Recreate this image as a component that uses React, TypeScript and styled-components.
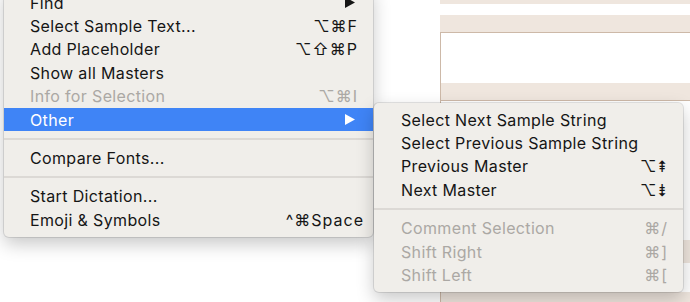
import styled, {createGlobalStyle} from 'styled-components';

const GlobalStyle = createGlobalStyle`
  html, body {
    margin: 0;
    padding: 0;
    background: #ffffff;
  }
  body {
    font-family: Inter, "Liberation Sans", "DejaVu Sans", sans-serif;
  }
`;

type Row =
  | {label: string; keys?: string; disabled?: boolean; active?: boolean; arrow?: boolean; overhang?: number}
  | 'sep';

const mainItems: Row[] = [
  {label: 'Find', arrow: true},
  {label: 'Select Sample Text...', keys: '⌥⌘F'},
  {label: 'Add Placeholder', keys: '⌥⇧⌘P'},
  {label: 'Show all Masters'},
  {label: 'Info for Selection', keys: '⌥⌘I', disabled: true},
  {label: 'Other', arrow: true, active: true},
  'sep',
  {label: 'Compare Fonts...'},
  'sep',
  {label: 'Start Dictation...'},
  {label: 'Emoji & Symbols', keys: '^⌘Space', overhang: 6},
];

const subItems: Row[] = [
  {label: 'Select Next Sample String'},
  {label: 'Select Previous Sample String'},
  {label: 'Previous Master', keys: '⌥⇞'},
  {label: 'Next Master', keys: '⌥⇟'},
  'sep',
  {label: 'Comment Selection', keys: '⌘/', disabled: true},
  {label: 'Shift Right', keys: '⌘]', disabled: true},
  {label: 'Shift Left', keys: '⌘[', disabled: true},
];

const Screen = styled.div`
  position: relative;
  width: 690px;
  height: 302px;
  overflow: hidden;
  display: flex;
  background: #ffffff;
`;

const Gutter = styled.div`
  width: 440px;
  flex-shrink: 0;
`;

const Sheet = styled.div`
  flex: 1;
  display: flex;
  flex-direction: column;
`;

const Band = styled.div<{$h: number; $tone?: 'beige' | 'white'; $line?: boolean}>`
  height: ${p => p.$h}px;
  flex-shrink: 0;
  background: ${p => (p.$tone === 'beige' ? '#efe6de' : '#ffffff')};
  border-bottom: ${p => (p.$line ? '1px solid #cdb9a8' : 'none')};
`;

const Table = styled.div`
  flex: 1;
  display: flex;
  flex-direction: column;
  border-left: 1px solid #cdb9a8;
`;

const Menu = styled.div<{$left: number; $top: number; $width: number}>`
  position: absolute;
  left: ${p => p.$left}px;
  top: ${p => p.$top}px;
  width: ${p => p.$width}px;
  box-sizing: border-box;
  padding: 5px 0;
  background: #f0eeea;
  border-radius: 5px;
  box-shadow: 0 0 0 1px rgba(0, 0, 0, 0.1), 0 7px 18px rgba(0, 0, 0, 0.22);
  display: flex;
  flex-direction: column;
`;

const Item = styled.div<{$active?: boolean; $disabled?: boolean; $pad: number}>`
  height: 23.4px;
  display: flex;
  align-items: center;
  padding: 0 15px 0 ${p => p.$pad}px;
  font-size: 16px;
  letter-spacing: 0.35px;
  white-space: nowrap;
  background: ${p => (p.$active ? '#3f84f6' : 'transparent')};
  color: ${p => (p.$active ? '#ffffff' : p.$disabled ? '#aba8a4' : '#151515')};
`;

const Label = styled.span`
  flex: 1;
`;

const Keys = styled.span<{$overhang?: number}>`
  margin-right: ${p => -(p.$overhang || 0)}px;
  font-family: Inter, "DejaVu Sans", sans-serif;
  letter-spacing: 1px;
`;

const Arrow = styled.svg`
  width: 10px;
  height: 11px;
  margin-right: 3px;
`;

const Separator = styled.div`
  height: 15px;
  display: flex;
  align-items: center;

  &::after {
    content: '';
    flex: 1;
    height: 2px;
    background: #dcd9d5;
  }
`;

const MenuBody = ({items, pad}: {items: Row[]; pad: number}) => (
  <>
    {items.map((it, i) =>
      it === 'sep' ? (
        <Separator key={i} />
      ) : (
        <Item key={i} $active={it.active} $disabled={it.disabled} $pad={pad}>
          <Label>{it.label}</Label>
          {it.keys && <Keys $overhang={it.overhang}>{it.keys}</Keys>}
          {it.arrow && (
            <Arrow viewBox="0 0 10 11">
              <polygon points="0,0 10,5.5 0,11" fill="currentColor" />
            </Arrow>
          )}
        </Item>
      )
    )}
  </>
);

export default function App() {
  return (
    <>
      <GlobalStyle />
      <Screen>
        <Gutter />
        <Sheet>
          <Band $h={4} $tone="beige" />
          <Band $h={11} />
          <Band $h={17} $tone="beige" $line />
          <Table>
            <Band $h={50} />
            <Band $h={17} $tone="beige" $line />
            <Band $h={139} />
            <Band $h={23} $tone="beige" />
            <Band $h={29} />
            <Band $h={12} $tone="beige" />
          </Table>
        </Sheet>

        <Menu $left={4} $top={-14} $width={369}>
          <MenuBody items={mainItems} pad={26} />
        </Menu>

        <Menu $left={374} $top={103} $width={309}>
          <MenuBody items={subItems} pad={27} />
        </Menu>
      </Screen>
    </>
  );
}
